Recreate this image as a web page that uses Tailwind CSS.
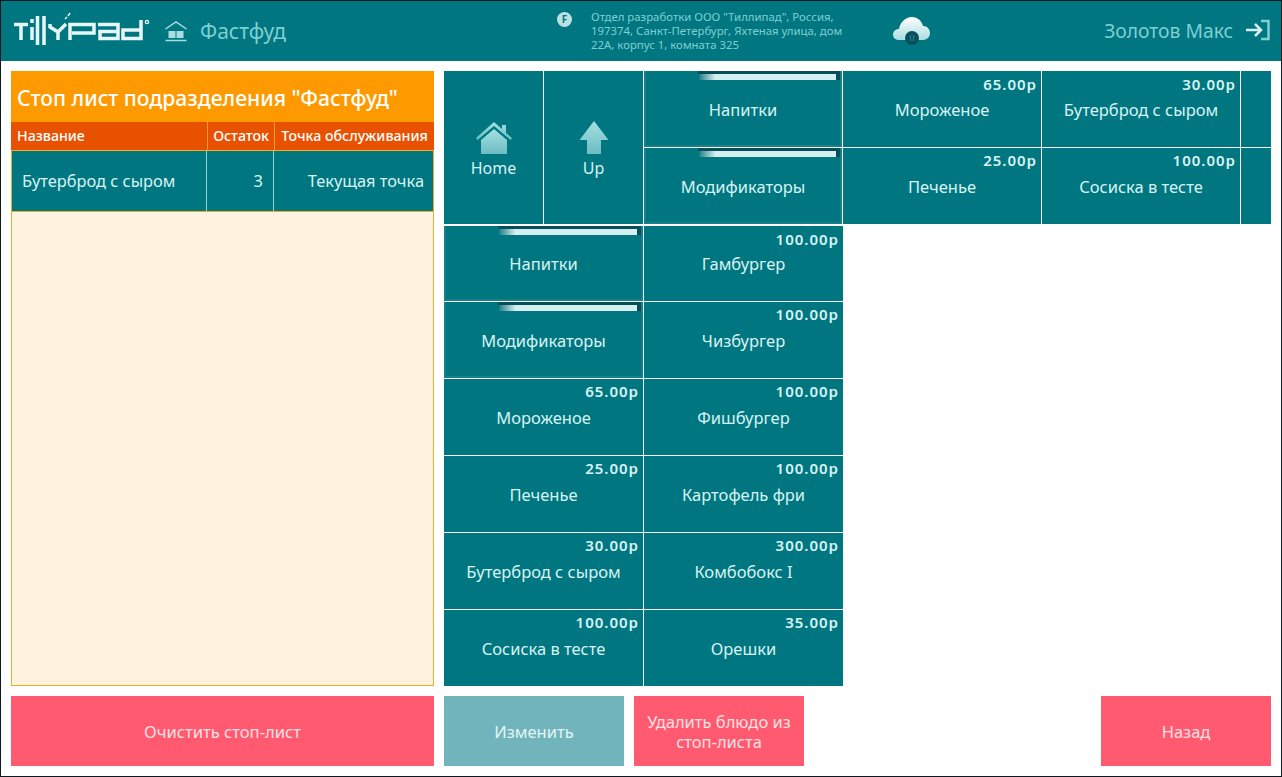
<!DOCTYPE html>
<html>
<head>
    <meta charset="utf-8">
    <title>Стоп лист</title>
    <script src="https://cdn.jsdelivr.net/npm/@tailwindcss/browser@4"></script>
</head>
<body class="bg-white font-['Noto_Sans',sans-serif]">
<div class="w-[1282px] h-[777px] overflow-hidden flex flex-col border border-[#0a1a20] bg-white">

    <!-- top bar -->
    <header class="h-[60px] shrink-0 bg-[#007680] flex items-center relative">
        <svg class="absolute left-[12px] top-[11px] w-[140px] h-[36px]" viewBox="0 0 140 36" fill="none" stroke="#e6f7f8" stroke-width="3.500">
            <path d="M1 12.500H15M8 12.500V28"/>
            <path d="M19 15V28M19 7V11"/>
            <path d="M24.500 4V33M31 4V33"/>
            <path d="M37 12V15L45 20L53 12M45 20V28"/>
            <path d="M55 4L57 1M52 7L54 5" stroke-width="1.500"/>
            <path d="M57 28V12.500H81V21H59"/>
            <path d="M85 12.500H105V26.500H87V19.500H104"/>
            <path d="M128 8V26.500H110V18H127"/>
            <circle cx="134" cy="10" r="1.600" stroke-width="1.400"/>
        </svg>
        <svg class="ml-[163px] w-[24px] h-[24px]" viewBox="0 0 24 24" fill="none">
            <path d="M1.500 10L12 3L22.500 10" stroke="#a8dde0" stroke-width="1.500"/>
            <rect x="4.500" y="12" width="7" height="7" fill="#a8dde0"/>
            <rect x="12.500" y="12" width="7" height="7" fill="#a8dde0"/>
            <path d="M1.500 21.500H22.500" stroke="#a8dde0" stroke-width="1.500"/>
        </svg>
        <span class="ml-[12px] text-[21px] leading-none text-[#7fcfd3]">Фастфуд</span>

        <div class="absolute left-[556px] top-[11px] w-[15px] h-[15px] rounded-full bg-[#b9e2e4] text-[#007680] text-[10px] font-bold leading-[15px] text-center">F</div>
        <p class="absolute left-[590px] top-[9px] w-[270px] text-[11.400px] leading-[14px] text-[#7fcfd3]">Отдел разработки ООО "Тиллипад", Россия, 197374, Санкт-Петербург, Яхтеная улица, дом 22А, корпус 1, комната 325</p>

        <svg class="absolute left-[891px] top-[15px] w-[39px] h-[30px]" viewBox="0 0 39 30">
            <defs>
                <linearGradient id="cloudFill" x1="0" y1="0" x2="0" y2="1">
                    <stop offset="0" stop-color="#ffffff"/>
                    <stop offset="1" stop-color="#a9dde0"/>
                </linearGradient>
            </defs>
            <path d="M7 24C3 24 1 21.500 1 18.500C1 15.500 3.500 13 7 13C8 7 13 1 20 1C26 1 30 5.500 31 10C35.500 10 38 13.500 38 17C38 21 35 24 31 24Z" fill="url(#cloudFill)"/>
            <circle cx="20" cy="22" r="7" fill="#0b4f5c"/>
            <path d="M18.500 19V25M21.500 19V25" stroke="#1f7f88" stroke-width="1.200"/>
        </svg>

        <span class="absolute right-[48px] top-[18px] text-[19.300px] leading-[24px] text-[#7fcfd3]">Золотов Макс</span>
        <svg class="absolute left-[1244px] top-[18px] w-[26px] h-[22px]" viewBox="0 0 26 22" fill="none">
            <path d="M1 11H15M10 5L16 11L10 17" stroke="#d6f0f1" stroke-width="2.500"/>
            <path d="M16 2H23.500V20H16" stroke="#7fcfd3" stroke-width="2.500"/>
        </svg>
    </header>

    <!-- content -->
    <main class="flex-1 flex pl-[10px] pr-[10px] pt-[10px] gap-[10px]">

        <!-- stop list -->
        <section class="w-[423px] shrink-0 flex flex-col">
            <div class="h-[615px] bg-[#f0ad28] p-px">
                <div class="h-full bg-[#fff2de] flex flex-col">
                    <h1 class="h-[51px] shrink-0 -mx-px -mt-px pl-[6px] pt-[3px] bg-[#ff9900] text-white text-[21.100px] font-medium leading-none flex items-center whitespace-nowrap">Стоп лист подразделения "Фастфуд"</h1>
                    <div class="h-[29px] shrink-0 grid grid-cols-[196px_66px_1fr] gap-px bg-[#f0a030] -mx-px text-white text-[14.200px] font-medium border-b border-[#f0ad28]">
                        <div class="bg-[#e85100] pl-[6px] flex items-center">Название</div>
                        <div class="bg-[#e85100] flex items-center justify-center">Остаток</div>
                        <div class="bg-[#e85100] flex items-center justify-center whitespace-nowrap">Точка обслуживания</div>
                    </div>
                    <div class="h-[61px] shrink-0 grid grid-cols-[194px_66px_1fr] gap-px bg-[#8fd3d6] border-b border-[#f0ad28] text-[#d8f3f4] text-[16.400px]">
                        <div class="bg-[#007680] pl-[10px] pt-[1px] flex items-center">Бутерброд с сыром</div>
                        <div class="bg-[#007680] pr-[10px] pt-[1px] flex items-center justify-end">3</div>
                        <div class="bg-[#007680] pr-[9px] pt-[1px] flex items-center justify-end">Текущая точка</div>
                    </div>
                </div>
            </div>
            <button class="mt-[10px] h-[70px] pt-[2px] bg-[#ff5a70] text-[#ffe0e3] text-[16.600px]">Очистить стоп-лист</button>
        </section>

        <!-- tiles -->
        <section class="w-[827px] flex flex-col">
            <div class="grid grid-cols-[99px_99px_198px_198px_198px_30px] grid-rows-[76px_76px] gap-px text-[#d8f3f4] text-[16.500px]">
                <div class="row-span-2 bg-[#007680] flex flex-col items-center pt-[50px]">
                    <svg class="w-[38px] h-[34px]" viewBox="0 0 38 34">
                        <defs>
                            <linearGradient id="iconFill" x1="0" y1="0" x2="0" y2="1">
                                <stop offset="0" stop-color="#a5e0e2"/>
                                <stop offset="1" stop-color="#6cbcc2"/>
                            </linearGradient>
                        </defs>
                        <path d="M1 17L19 1L27 8V4H31V12L37 17L35.500 19L19 5L2.500 19Z" fill="url(#iconFill)"/>
                        <path d="M6 19L19 8L32 19V33H6Z" fill="url(#iconFill)"/>
                    </svg>
                    <span class="mt-[1px] text-[16px] leading-[24px]">Home</span>
                </div>
                <div class="row-span-2 bg-[#007680] flex flex-col items-center pt-[50px]">
                    <svg class="w-[30px] h-[34px]" viewBox="0 0 30 34">
                        <path d="M15 0L29.500 19H22V33H8V19H0.500Z" fill="url(#iconFill)"/>
                    </svg>
                    <span class="mt-[1px] text-[16px] leading-[24px]">Up</span>
                </div>

                <div class="relative bg-[#007680] border-x-2 border-b-2 border-[#158089] flex justify-center pt-[27px]">
                    <span class="absolute left-[52px] right-0 top-0 h-[3px] bg-[#044f5a]"></span>
                    <span class="absolute left-[53px] right-[4px] top-[3px] h-[6px] bg-gradient-to-r from-[#0d7e88] via-[#d5eff0] via-12% to-[#d5eff0]"></span>
                    <span class="absolute right-0 top-[3px] w-[4px] h-[6px] bg-[#044f5a]"></span>
                    <span class="leading-[24px]">Напитки</span>
                </div>
                <div class="bg-[#007680] flex flex-col">
                    <span class="pr-[4px] pt-[3px] self-end text-[15px] font-semibold tracking-[1px] leading-[20px]">65.00р</span>
                    <span class="text-center mt-[4px] leading-[24px]">Мороженое</span>
                </div>
                <div class="bg-[#007680] flex flex-col">
                    <span class="pr-[4px] pt-[3px] self-end text-[15px] font-semibold tracking-[1px] leading-[20px]">30.00р</span>
                    <span class="text-center mt-[4px] leading-[24px]">Бутерброд с сыром</span>
                </div>
                <div class="bg-[#007680]"></div>

                <div class="relative bg-[#007680] border-x-2 border-b-2 border-[#158089] flex justify-center pt-[27px]">
                    <span class="absolute left-[52px] right-0 top-0 h-[3px] bg-[#044f5a]"></span>
                    <span class="absolute left-[53px] right-[4px] top-[3px] h-[6px] bg-gradient-to-r from-[#0d7e88] via-[#d5eff0] via-12% to-[#d5eff0]"></span>
                    <span class="absolute right-0 top-[3px] w-[4px] h-[6px] bg-[#044f5a]"></span>
                    <span class="leading-[24px]">Модификаторы</span>
                </div>
                <div class="bg-[#007680] flex flex-col">
                    <span class="pr-[4px] pt-[2px] self-end text-[15px] font-semibold tracking-[1px] leading-[20px]">25.00р</span>
                    <span class="text-center mt-[5px] leading-[24px]">Печенье</span>
                </div>
                <div class="bg-[#007680] flex flex-col">
                    <span class="pr-[4px] pt-[2px] self-end text-[15px] font-semibold tracking-[1px] leading-[20px]">100.00р</span>
                    <span class="text-center mt-[5px] leading-[24px]">Сосиска в тесте</span>
                </div>
                <div class="bg-[#007680]"></div>
            </div>

            <div class="mt-[2px] w-[399px] grid grid-cols-[199px_199px] grid-rows-[75px_76px_76px_76px_76px_76px] gap-px text-[#d8f3f4] text-[16.500px]">
                <div class="relative bg-[#007680] border-x-2 border-b-2 border-[#158089] flex justify-center pt-[26px]">
                    <span class="absolute left-[52px] right-0 top-0 h-[3px] bg-[#044f5a]"></span>
                    <span class="absolute left-[53px] right-[4px] top-[3px] h-[6px] bg-gradient-to-r from-[#0d7e88] via-[#d5eff0] via-12% to-[#d5eff0]"></span>
                    <span class="absolute right-0 top-[3px] w-[4px] h-[6px] bg-[#044f5a]"></span>
                    <span class="leading-[24px]">Напитки</span>
                </div>
                <div class="bg-[#007680] flex flex-col">
                    <span class="pr-[4px] pt-[3px] self-end text-[15px] font-semibold tracking-[1px] leading-[20px]">100.00р</span>
                    <span class="text-center mt-[3px] leading-[24px]">Гамбургер</span>
                </div>
                <div class="relative bg-[#007680] border-x-2 border-b-2 border-[#158089] flex justify-center pt-[27px]">
                    <span class="absolute left-[52px] right-0 top-0 h-[3px] bg-[#044f5a]"></span>
                    <span class="absolute left-[53px] right-[4px] top-[3px] h-[6px] bg-gradient-to-r from-[#0d7e88] via-[#d5eff0] via-12% to-[#d5eff0]"></span>
                    <span class="absolute right-0 top-[3px] w-[4px] h-[6px] bg-[#044f5a]"></span>
                    <span class="leading-[24px]">Модификаторы</span>
                </div>
                <div class="bg-[#007680] flex flex-col">
                    <span class="pr-[4px] pt-[2px] self-end text-[15px] font-semibold tracking-[1px] leading-[20px]">100.00р</span>
                    <span class="text-center mt-[5px] leading-[24px]">Чизбургер</span>
                </div>
                <div class="bg-[#007680] flex flex-col">
                    <span class="pr-[4px] pt-[2px] self-end text-[15px] font-semibold tracking-[1px] leading-[20px]">65.00р</span>
                    <span class="text-center mt-[5px] leading-[24px]">Мороженое</span>
                </div>
                <div class="bg-[#007680] flex flex-col">
                    <span class="pr-[4px] pt-[2px] self-end text-[15px] font-semibold tracking-[1px] leading-[20px]">100.00р</span>
                    <span class="text-center mt-[5px] leading-[24px]">Фишбургер</span>
                </div>
                <div class="bg-[#007680] flex flex-col">
                    <span class="pr-[4px] pt-[2px] self-end text-[15px] font-semibold tracking-[1px] leading-[20px]">25.00р</span>
                    <span class="text-center mt-[5px] leading-[24px]">Печенье</span>
                </div>
                <div class="bg-[#007680] flex flex-col">
                    <span class="pr-[4px] pt-[2px] self-end text-[15px] font-semibold tracking-[1px] leading-[20px]">100.00р</span>
                    <span class="text-center mt-[5px] leading-[24px]">Картофель фри</span>
                </div>
                <div class="bg-[#007680] flex flex-col">
                    <span class="pr-[4px] pt-[2px] self-end text-[15px] font-semibold tracking-[1px] leading-[20px]">30.00р</span>
                    <span class="text-center mt-[5px] leading-[24px]">Бутерброд с сыром</span>
                </div>
                <div class="bg-[#007680] flex flex-col">
                    <span class="pr-[4px] pt-[2px] self-end text-[15px] font-semibold tracking-[1px] leading-[20px]">300.00р</span>
                    <span class="text-center mt-[5px] leading-[24px]">Комбобокс I</span>
                </div>
                <div class="bg-[#007680] flex flex-col">
                    <span class="pr-[4px] pt-[2px] self-end text-[15px] font-semibold tracking-[1px] leading-[20px]">100.00р</span>
                    <span class="text-center mt-[5px] leading-[24px]">Сосиска в тесте</span>
                </div>
                <div class="bg-[#007680] flex flex-col">
                    <span class="pr-[4px] pt-[2px] self-end text-[15px] font-semibold tracking-[1px] leading-[20px]">35.00р</span>
                    <span class="text-center mt-[5px] leading-[24px]">Орешки</span>
                </div>
            </div>

            <div class="mt-[10px] flex h-[70px] text-[16.500px]">
                <button class="w-[180px] pt-[2px] bg-[#72b4bc] text-[#e0f6f7]">Изменить</button>
                <button class="ml-[10px] w-[170px] pt-[2px] bg-[#ff5a70] text-[#ffe0e3] leading-[20px] px-[8px]">Удалить блюдо из стоп-листа</button>
                <button class="ml-auto w-[170px] pt-[2px] bg-[#ff5a70] text-[#ffe0e3]">Назад</button>
            </div>
        </section>
    </main>
</div>
</body>
</html>
